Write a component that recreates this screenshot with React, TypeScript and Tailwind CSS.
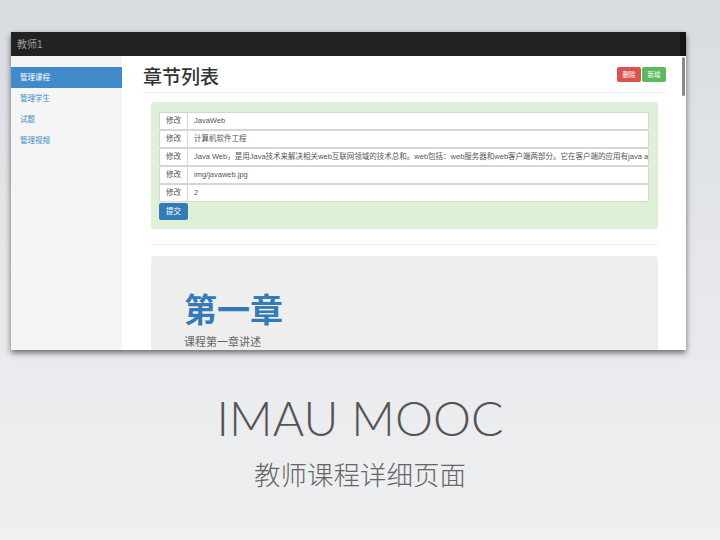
const fields = [
  "JavaWeb",
  "计算机软件工程",
  "Java Web，是用Java技术来解决相关web互联网领域的技术总和。web包括：web服务器和web客户端两部分。它在客户端的应用有java applet，不过现在使用的很少",
  "img/javaweb.jpg",
  "2",
];

const menu = ["管理课程", "管理学生", "试题", "管理视频"];

function BrowserShot() {
  return (
    <div className="ml-[11px] flex h-[318px] w-[675px] overflow-hidden bg-white shadow-[0_3px_6px_rgba(0,0,0,0.55)]">
      <div className="flex min-w-0 flex-1 flex-col">
        <div className="flex h-[24px] shrink-0 items-center bg-[#222] pl-[6px] text-[10px] text-[#9d9d9d]">
          教师1
        </div>

        <div className="flex min-h-0 flex-1">
          <aside className="w-[111px] shrink-0 bg-[#f5f5f5] pt-[11px]">
            {menu.map((item, i) => (
              <div
                key={item}
                className={`flex h-[21px] items-center pl-[9px] text-[7.5px] ${
                  i === 0 ? "bg-[#428bca] text-white" : "text-[#428bca]"
                }`}
              >
                {item}
              </div>
            ))}
          </aside>

          <main className="min-w-0 flex-1 pt-[11px]">
            <div className="mr-[14px] ml-[21px] flex items-start justify-between border-b border-[#eee] pb-[4px]">
              <h1 className="text-[19px] leading-[21px] font-medium text-[#333]">章节列表</h1>
              <div className="flex gap-px">
                <button className="flex h-[15px] w-[24px] items-center justify-center rounded-[2px] bg-[#d9534f] text-[6.5px] text-white">
                  删除
                </button>
                <button className="flex h-[15px] w-[24px] items-center justify-center rounded-[2px] bg-[#5cb85c] text-[6.5px] text-white">
                  新增
                </button>
              </div>
            </div>

            <div className="mt-[9px] mr-[22px] ml-[29px] rounded-[3px] bg-[#dff0d8] pt-[10px] pr-[9px] pb-[9px] pl-[8px]">
              {fields.map((value) => (
                <div
                  key={value}
                  className="flex h-[18px] overflow-hidden rounded-[2px] border border-[#d6d6d6] bg-white text-[7.5px] text-[#555]"
                >
                  <span className="flex w-[28px] shrink-0 items-center justify-center border-r border-[#d6d6d6]">
                    修改
                  </span>
                  <span className="min-w-0 flex-1 overflow-hidden pr-[4px] pl-[6px] leading-[16px] whitespace-nowrap">
                    {value}
                  </span>
                </div>
              ))}
              <button className="mt-px flex h-[17px] w-[29px] items-center justify-center rounded-[2px] bg-[#337ab7] text-[7.5px] text-white">
                提交
              </button>
            </div>

            <div className="mt-[15px] mr-[22px] ml-[29px] border-t border-[#f0f0f0]" />

            <div className="mt-[11px] mr-[22px] ml-[29px] h-[120px] rounded-[4px] bg-[#eee] pt-[37px] pl-[33px]">
              <div className="text-[33px] leading-[36px] font-bold text-[#337ab7]">第一章</div>
              <div className="mt-[6px] text-[11px] leading-[15px] text-[#666]">课程第一章讲述</div>
            </div>
          </main>
        </div>
      </div>

      <div className="flex w-[6px] shrink-0 flex-col">
        <div className="h-[24px] bg-[#141414]" />
        <div className="flex flex-1 justify-center bg-white">
          <div className="mt-px h-[39px] w-[3px] rounded-full bg-[#8a8a8a]" />
        </div>
      </div>
    </div>
  );
}

export default function App() {
  return (
    <div
      className="flex h-[540px] w-[720px] flex-col overflow-hidden bg-linear-to-b from-[#d8dce1] via-[#e6e8eb] to-[#eff0f2] pt-[32px]"
      style={{ fontFamily: '"Liberation Sans", "Noto Sans CJK SC", sans-serif' }}
    >
      <BrowserShot />

      <div className="mt-[43px] text-center">
        <div
          className="text-[48px] leading-[50px] font-light text-[#555]"
          style={{ fontFamily: 'Lato, "Noto Sans CJK SC", sans-serif' }}
        >
          IMAU MOOC
        </div>
        <div className="mt-[18px] text-[26.5px] leading-[30px] font-light text-[#666]">
          教师课程详细页面
        </div>
      </div>
    </div>
  );
}
